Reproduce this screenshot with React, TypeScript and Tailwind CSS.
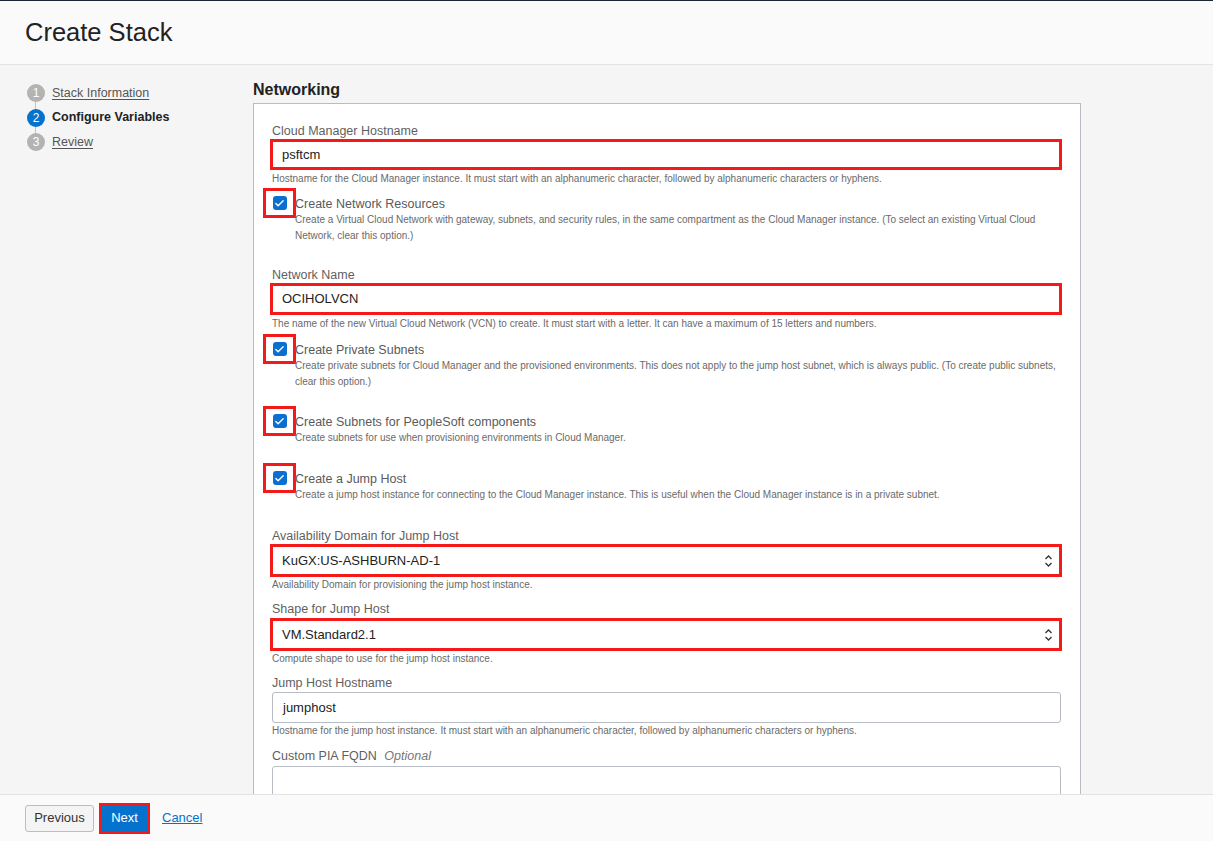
import { Check } from 'lucide-react'

const RED = 'border-[3px] border-[#f41a1a]'

const Label = ({ children, className = '' }: { children: React.ReactNode; className?: string }) => (
  <div className={`text-[12.5px] leading-4 text-[#5f5f5f] ${className}`}>{children}</div>
)

const Help = ({ children, className = '' }: { children: React.ReactNode; className?: string }) => (
  <div className={`text-[10px] leading-[14px] text-[#6a6a6a] ${className}`}>{children}</div>
)

const Arrows = () => (
  <svg width="9" height="14" viewBox="0 0 9 14" className="shrink-0">
    <path d="M1.5 5 L4.5 2 L7.5 5" fill="none" stroke="#333" strokeWidth="1.3" />
    <path d="M1.5 9 L4.5 12 L7.5 9" fill="none" stroke="#333" strokeWidth="1.3" />
  </svg>
)

const RedInput = ({ value, select, className = '' }: { value: string; select?: boolean; className?: string }) => (
  <div className={`-ml-[2px] -mr-px flex items-center bg-white pl-[9px] pr-[6px] text-[13px] text-[#222] ${RED} ${className}`}>
    <span className="flex-1">{value}</span>
    {select && <Arrows />}
  </div>
)

const CheckRow = ({ title, desc, className = '' }: { title: string; desc: React.ReactNode; className?: string }) => (
  <div className={`-ml-[9px] flex ${className}`}>
    <div className={`flex h-[30px] w-[33px] shrink-0 items-center justify-center ${RED}`}>
      <div className="flex h-[14px] w-[14px] items-center justify-center rounded-[3px] bg-[#0a6fd0]">
        <Check size={11} strokeWidth={3} color="white" />
      </div>
    </div>
    <div className="-ml-px pt-2">
      <div className="text-[12.5px] leading-4 text-[#5a5a5a]">{title}</div>
      <div className="text-[10px] leading-4 text-[#6a6a6a]">{desc}</div>
    </div>
  </div>
)

const Step = ({ n, label, active, first, last }: { n: number; label: string; active?: boolean; first?: boolean; last?: boolean }) => (
  <div className="relative flex h-[24.5px] items-center">
    {!first && <div className="absolute left-[35px] top-0 h-1/2 w-px bg-[#c4c4c4]" />}
    {!last && <div className="absolute left-[35px] bottom-0 h-1/2 w-px bg-[#c4c4c4]" />}
    <div
      className={`relative ml-[27px] flex h-[18px] w-[18px] items-center justify-center rounded-full text-[12px] text-white ${
        active ? 'bg-[#0572ce]' : 'bg-[#b3b3b3]'
      }`}
    >
      {n}
    </div>
    <span
      className={`ml-[7px] text-[12.5px] ${active ? 'font-bold text-[#222]' : 'text-[#555] underline underline-offset-2'}`}
    >
      {label}
    </span>
  </div>
)

export default function App() {
  return (
    <div className="flex h-[841px] flex-col overflow-hidden bg-[#f5f5f5] font-['Liberation_Sans',Arial,sans-serif]">
      <div className="h-px bg-[#1d2634]" />
      <header className="flex h-[64px] shrink-0 items-center border-b border-[#e3e3e3] bg-[#fafafa] pl-[25px]">
        <h1 className="text-[25.5px] text-[#222]">Create Stack</h1>
      </header>

      <main className="flex min-h-0 flex-1 overflow-hidden">
        <aside className="w-[253px] shrink-0 pt-[16px]">
          <Step n={1} label="Stack Information" first />
          <Step n={2} label="Configure Variables" active />
          <Step n={3} label="Review" last />
        </aside>

        <section className="flex w-[828px] flex-col pt-[15px]">
          <h2 className="mb-[3px] text-[16px] font-bold leading-5 text-[#222]">Networking</h2>
          <div className="flex-1 border border-b-0 border-[#b8bdc5] bg-white pl-[18px] pr-[19px] pt-[19px]">
            <Label>Cloud Manager Hostname</Label>
            <RedInput value="psftcm" className="h-[31px]" />
            <Help className="mt-[2px]">
              Hostname for the Cloud Manager instance. It must start with an alphanumeric character, followed by alphanumeric characters or hyphens.
            </Help>
            <CheckRow
              className="mt-[2px]"
              title="Create Network Resources"
              desc={
                <>
                  Create a Virtual Cloud Network with gateway, subnets, and security rules, in the same compartment as the Cloud Manager instance. (To select an existing Virtual Cloud
                  <br />
                  Network, clear this option.)
                </>
              }
            />

            <Label className="mt-[23px]">Network Name</Label>
            <RedInput value="OCIHOLVCN" className="h-[32px]" />
            <Help className="mt-[2px]">
              The name of the new Virtual Cloud Network (VCN) to create. It must start with a letter. It can have a maximum of 15 letters and numbers.
            </Help>
            <CheckRow
              className="mt-[3px]"
              title="Create Private Subnets"
              desc={
                <>
                  Create private subnets for Cloud Manager and the provisioned environments. This does not apply to the jump host subnet, which is always public. (To create public subnets,
                  <br />
                  clear this option.)
                </>
              }
            />
            <CheckRow
              className="mt-[16px]"
              title="Create Subnets for PeopleSoft components"
              desc="Create subnets for use when provisioning environments in Cloud Manager."
            />
            <CheckRow
              className="mt-[17px]"
              title="Create a Jump Host"
              desc="Create a jump host instance for connecting to the Cloud Manager instance. This is useful when the Cloud Manager instance is in a private subnet."
            />

            <Label className="mt-[25px]">Availability Domain for Jump Host</Label>
            <RedInput value="KuGX:US-ASHBURN-AD-1" select className="h-[33px]" />
            <Help className="mt-[1px]">Availability Domain for provisioning the jump host instance.</Help>

            <Label className="mt-[9px]">Shape for Jump Host</Label>
            <RedInput value="VM.Standard2.1" select className="mt-px h-[33px]" />
            <Help className="mt-[1px]">Compute shape to use for the jump host instance.</Help>

            <Label className="mt-[9px]">Jump Host Hostname</Label>
            <div className="mt-px flex h-[31px] items-center rounded-[3px] border border-[#b8bcc4] pl-[10px] text-[13px] text-[#222]">
              jumphost
            </div>
            <Help className="mt-[1px]">
              Hostname for the jump host instance. It must start with an alphanumeric character, followed by alphanumeric characters or hyphens.
            </Help>

            <Label className="mt-[10px]">
              Custom PIA FQDN <span className="ml-1 italic text-[#777]">Optional</span>
            </Label>
            <div className="mt-[2px] h-[40px] rounded-[3px] border border-[#b8bcc4]" />
          </div>
        </section>
      </main>

      <footer className="flex h-[47px] shrink-0 items-center border-t border-[#e3e3e3] bg-[#fafafa] pl-[25px]">
        <button className="h-[27px] w-[69px] rounded-[3px] border border-[#bdbdbd] bg-[#f4f4f4] text-[13px] text-[#333]">
          Previous
        </button>
        <div className={`ml-[5px] flex h-[31px] w-[51px] items-center justify-center ${RED}`}>
          <div className="flex h-full w-full items-center justify-center bg-[#0572ce] text-[13px] text-white">Next</div>
        </div>
        <a className="ml-[12px] text-[13px] text-[#0572ce] underline">Cancel</a>
      </footer>
    </div>
  )
}
